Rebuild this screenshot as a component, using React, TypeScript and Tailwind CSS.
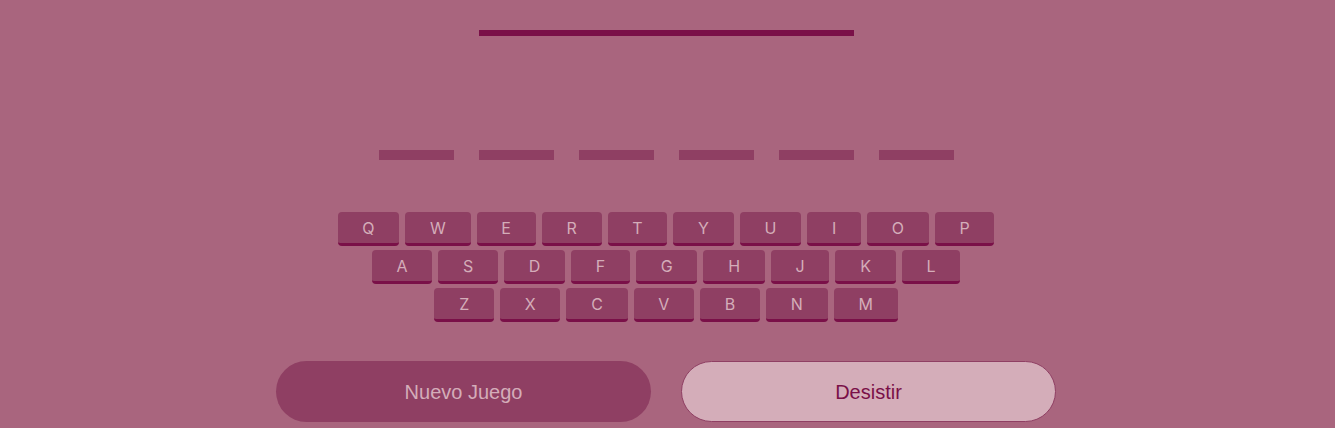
const rows = [
  ["Q", "W", "E", "R", "T", "Y", "U", "I", "O", "P"],
  ["A", "S", "D", "F", "G", "H", "J", "K", "L"],
  ["Z", "X", "C", "V", "B", "N", "M"],
];

export default function App() {
  const slots = 6;

  return (
    <main className="flex min-h-screen flex-col items-center bg-[#a9657e] pt-[30px] pr-[3px]">
      {/* Gallows base */}
      <div className="h-[6px] w-[375px] bg-[#7a1048]" />

      {/* Word slots */}
      <div className="mt-[114px] flex gap-[25px]">
        {Array.from({ length: slots }).map((_, i) => (
          <div key={i} className="h-[10px] w-[75px] bg-[#8f3f63]" />
        ))}
      </div>

      {/* Keyboard */}
      <div className="mt-[52px] flex flex-col items-center gap-[4px] font-['Inter',sans-serif]">
        {rows.map((row, r) => (
          <div key={r} className="flex gap-[6px]">
            {row.map((letter) => (
              <button
                key={letter}
                className="flex h-[34px] items-center justify-center rounded-[4px] border-b-[3px] border-[#7a1048] bg-[#8f3f63] px-[24.75px] pt-[1px] text-[16px] text-[#d4adb9]"
              >
                {letter}
              </button>
            ))}
          </div>
        ))}
      </div>

      {/* Actions */}
      <div className="mt-[39px] flex gap-[30px] font-['Liberation_Sans',Arial,sans-serif] text-[20px]">
        <button className="h-[61px] w-[375px] rounded-full bg-[#8f3f63] text-[#d4adb9]">
          Nuevo Juego
        </button>
        <button className="h-[61px] w-[375px] rounded-full border border-[#8f3f63] bg-[#d4adb9] text-[#7a1048]">
          Desistir
        </button>
      </div>
    </main>
  );
}
